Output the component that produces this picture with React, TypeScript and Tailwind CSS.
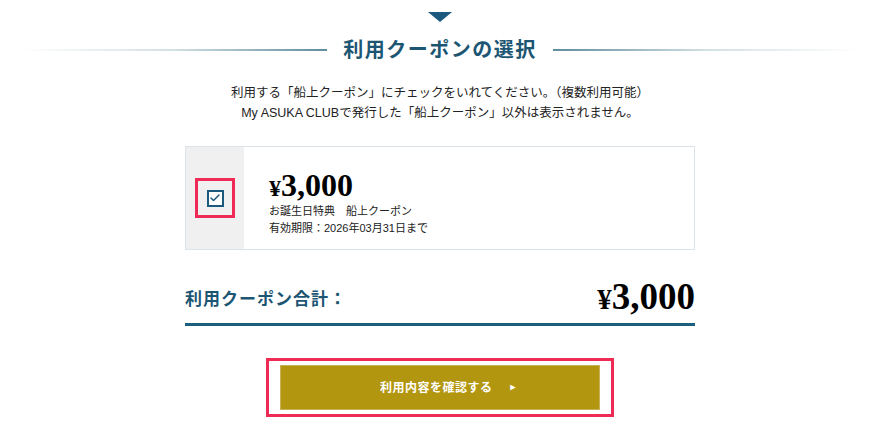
import { Check } from 'lucide-react';

const jp = { fontFamily: '"Liberation Sans", "Noto Sans CJK JP", sans-serif' };
const serif = { fontFamily: '"Liberation Serif", "Noto Sans CJK JP", serif' };

function Yen({ size, yen }: { size: string; yen: string }) {
  return (
    <span className={`${size} font-bold leading-none text-black`} style={serif}>
      <span className={yen}>¥</span>3,000
    </span>
  );
}

export default function App() {
  return (
    <div className="w-[880px] h-[435px] bg-white flex flex-col items-center" style={jp}>
      {/* arrow */}
      <div className="mt-3 w-0 h-0 border-x-[12px] border-x-transparent border-t-[10px] border-t-[#1b5a7e]" />

      {/* heading */}
      <div className="mt-[18px] w-full px-5 flex items-center gap-4">
        <div className="flex-1 h-[2px] bg-gradient-to-r from-white via-[#d3e0e4] to-[#5f8c9d]" />
        <h2 className="text-[20px] font-bold text-[#1c5673] tracking-[1.5px] leading-none">
          利用クーポンの選択
        </h2>
        <div className="flex-1 h-[2px] bg-gradient-to-l from-white via-[#d3e0e4] to-[#5f8c9d]" />
      </div>

      {/* note */}
      <div className="mt-[23px] text-[12.5px] leading-[20px] text-[#222] text-center">
        <p>利用する「船上クーポン」にチェックをいれてください。（複数利用可能）</p>
        <p>My ASUKA CLUBで発行した「船上クーポン」以外は表示されません。</p>
      </div>

      {/* coupon card */}
      <div className="mt-[23px] w-[510px] h-[104px] border border-[#dbe4e8] flex">
        <div className="w-[58px] bg-[#f0f0f0] flex items-center justify-center">
          <div className="w-[40px] h-[40px] border-[3px] border-[#ee2a55] flex items-center justify-center">
            <div className="w-[17px] h-[17px] border-2 border-[#1b5a7e] bg-white flex items-center justify-center">
              <Check className="w-[12px] h-[12px] text-[#1b5a7e]" strokeWidth={3} />
            </div>
          </div>
        </div>
        <div className="pl-[25px] pt-[22px] flex flex-col">
          <Yen size="text-[32px]" yen="text-[24px]" />
          <p className="mt-[2px] text-[11px] leading-[17px] text-[#222]">お誕生日特典　船上クーポン</p>
          <p className="text-[11px] leading-[17px] text-[#222]">有効期限：2026年03月31日まで</p>
        </div>
      </div>

      {/* total */}
      <div className="mt-[28px] w-[510px] pb-[8px] border-b-[3px] border-[#1b5f7d] flex items-end justify-between">
        <span className="text-[17px] font-bold text-[#1c5673] tracking-[1px] pb-[3px]">利用クーポン合計：</span>
        <Yen size="text-[37px]" yen="text-[29px]" />
      </div>

      {/* button */}
      <div className="mt-[32px] w-[348px] h-[59px] border-[3px] border-[#ee2a55] flex items-center justify-center">
        <button className="w-[320px] h-[45px] pl-[18px] bg-[#b3960f] border border-[#c7b25a] text-white text-[12px] font-bold tracking-[0.5px] flex items-center justify-center gap-[16px]">
          利用内容を確認する
          <span className="text-[9px]">►</span>
        </button>
      </div>
    </div>
  );
}
